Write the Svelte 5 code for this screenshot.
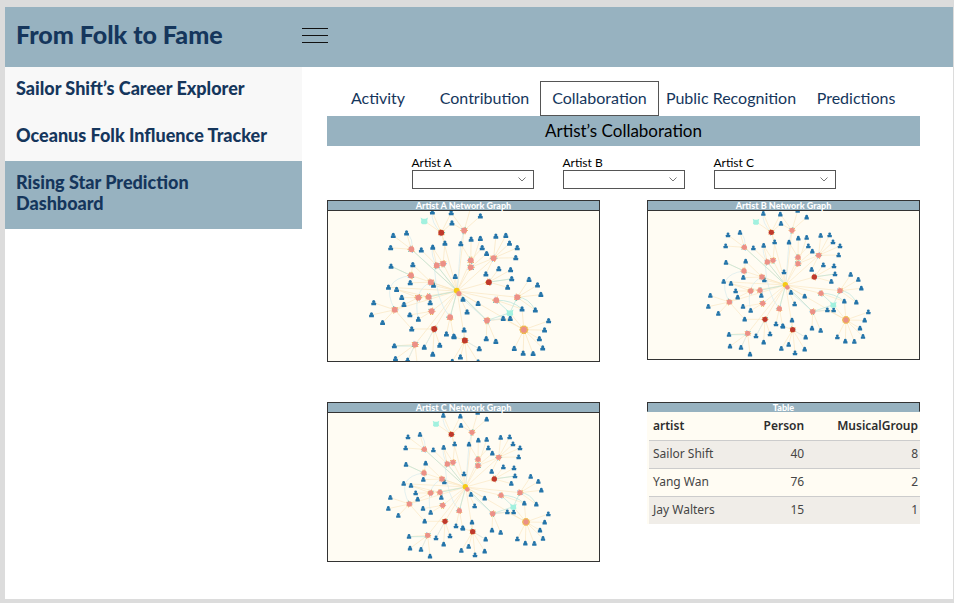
<script>
  const pages = [
    { label: 'Sailor Shift’s Career Explorer', active: false },
    { label: 'Oceanus Folk Influence Tracker', active: false },
    { label: 'Rising Star Prediction Dashboard', active: true }
  ];
  const tabs = ['Activity', 'Contribution', 'Collaboration', 'Public Recognition', 'Predictions'];
  const artists = ['A', 'B', 'C'];
  const rows = [
    ['Sailor Shift', 40, 8],
    ['Yang Wan', 76, 2],
    ['Jay Walters', 15, 1]
  ];

  const centre = [422, 261];
  // Each hub: position, colour kind, and the people attached to it.
  const hubs = [
    { x: 298, y: 148, kind: 'pink', leaves: [[285, 104], [249, 111], [242, 144]] },
    { x: 367, y: 192, kind: 'pink', leaves: [[325, 150], [356, 143]] },
    { x: 384, y: 187, kind: 'pink', leaves: [[389, 132], [356, 143]] },
    { x: 297, y: 219, kind: 'pink', leaves: [[302, 190], [243, 194]] },
    { x: 351, y: 237, kind: 'pink', leaves: [[302, 190], [295, 239]] },
    { x: 317, y: 279, kind: 'pink', leaves: [[272, 279], [258, 257], [278, 298]] },
    { x: 345, y: 277, kind: 'pink', leaves: [[349, 293], [258, 257]] },
    { x: 253, y: 312, kind: 'pink', leaves: [[196, 293], [190, 326], [220, 347], [278, 298], [299, 364]] },
    { x: 353, y: 316, kind: 'pink', leaves: [[294, 326], [317, 338]] },
    { x: 403, y: 332, kind: 'pink', leaves: [[393, 378], [413, 384]] },
    { x: 308, y: 406, kind: 'pink', leaves: [[252, 410], [255, 445], [288, 449], [315, 469]] },
    { x: 441, y: 97, kind: 'pink', leaves: [[406, 49], [458, 38], [485, 58], [408, 77]] },
    { x: 459, y: 178, kind: 'pink', leaves: [[432, 133], [460, 121], [490, 144]] },
    { x: 459, y: 197, kind: 'pink', leaves: [[502, 160], [485, 119]] },
    { x: 521, y: 172, kind: 'pink', leaves: [[527, 113], [554, 111], [564, 132], [585, 144], [581, 171], [500, 215]] },
    { x: 528, y: 286, kind: 'pink', leaves: [[598, 310]] },
    { x: 585, y: 278, kind: 'pink', leaves: [[617, 230], [640, 245], [649, 271], [634, 313]] },
    { x: 503, y: 341, kind: 'pink', leaves: [[547, 336], [566, 336], [501, 391], [527, 398]] },
    { x: 603, y: 366, kind: 'ringed', leaves: [[670, 342], [659, 367], [645, 391], [654, 416], [628, 431], [601, 430], [577, 417], [598, 310], [547, 336]] },
    { x: 379, y: 103, kind: 'red', leaves: [[355, 47], [408, 77], [406, 49], [389, 132]] },
    { x: 360, y: 364, kind: 'red', leaves: [[299, 364], [333, 414], [356, 433], [375, 408]] },
    { x: 508, y: 237, kind: 'red', leaves: [[535, 201], [567, 204], [570, 228], [559, 251]] },
    { x: 443, y: 395, kind: 'red', leaves: [[441, 367], [414, 385], [482, 418], [431, 440], [479, 454], [450, 465], [409, 452]] }
  ];
  const loose = [[417, 222], [438, 284], [479, 295], [449, 318], [358, 246], [236, 251]];
  const people = [...new Map([...hubs.flatMap((h) => h.leaves), ...loose].map((p) => [p.join(), p])).values()];
  const rays = Array.from({ length: 10 }, (_, i) => (i * Math.PI) / 5);
  const bits = ['#e8b13f', '#e8b13f', '#8fc9ea', '#efa14d', '#55bfa5'];
  const teal = [
    'M298 148L422 261', 'M243 194L297 219', 'M367 192L422 261', 'M345 277L422 261',
    'M508 237L570 228', 'M585 278Q615 278 634 313', 'M528 286L565 320', 'M565 320L585 278',
    'M565 320L503 341', 'M528 286Q570 285 598 310', 'M252 410H308', 'M403 332L422 261', 'M422 261L503 341'
  ];
  const blue = [
    'M285 104Q305 120 298 148', 'M356 143Q350 165 367 192', 'M379 103Q350 75 355 47',
    'M297 219Q210 230 253 312', 'M351 237Q300 260 317 338', 'M432 133L422 261',
    'M360 192Q365 290 403 332', 'M482 418L443 395', 'M333 414L360 364', 'M308 406L288 449', 'M503 341L547 336',
    'M438 284L503 341', 'M441 97Q435 120 432 133'
  ];
</script>

{#snippet network(name)}
  <svg class="network" viewBox="9 39 813 {name === 'A' ? 450 : 445}" role="img" aria-label="Artist {name} network">
    <g transform={name === 'A' ? 'scale(1.107) translate(-64 -9)' : ''}>
      <g class="gold">
        {#each hubs as h}
          <path d="M{h.x} {h.y}L{centre[0]} {centre[1]}" />
          {#each h.leaves as l}<path d="M{h.x} {h.y}L{l[0]} {l[1]}" />{/each}
        {/each}
        {#each loose as l}<path d="M{centre[0]} {centre[1]}L{l[0]} {l[1]}" />{/each}
        <path d="M379 103L333 71M521 172L459 197M603 366L565 320" />
      </g>
      <g class="blue">{#each blue as d}<path {d} />{/each}</g>
      <g class="teal">{#each teal as d}<path {d} />{/each}</g>
      {#each people as p}
        <g transform="translate({p[0]} {p[1]})" fill="#2474a9">
          <circle cy="-3.5" r="4.2" />
          <path d="M-6.5 6.5V1Q-6.5-1-4-1H4Q6.5-1 6.5 1V6.5Z" />
        </g>
      {/each}
      {#each hubs as h, n}
        {#each rays as r, i}
          <circle
            cx={h.x + Math.cos(r) * 9}
            cy={h.y + Math.sin(r) * 9}
            r={h.kind === 'ringed' ? 3.2 : (i + n) % 3 ? 1.6 : 0}
            fill={h.kind === 'ringed' ? '#edb84a' : bits[(i + n) % 5]}
          />
        {/each}
        <circle cx={h.x} cy={h.y} r="8" fill={h.kind === 'red' ? '#c0392b' : '#ec9086'} />
      {/each}
      <circle cx="421" cy="260" r="8" fill="#f5cb14" />
      <circle cx="427" cy="268" r="7" fill="#ec9086" />
      {#each [[333, 71], [565, 320]] as c}
        <path transform="translate({c[0]} {c[1]})" d="M-10-9L-4-6H4L10-9L8-2L9 6L5 9H-5L-9 6L-8-2Z" fill="#a2f1df" />
      {/each}
    </g>
  </svg>
{/snippet}

<div class="page">
  <header>
    <h1>From Folk to Fame</h1>
    <button class="menu" aria-label="Menu">
      <svg width="26" height="16" viewBox="0 0 26 16"><path d="M0 1.5H26M0 8.5H26M0 15.5H26" stroke="#111" /></svg>
    </button>
  </header>
  <div class="body">
    <nav class="side" aria-label="Pages">
      {#each pages as p}<a href="#top" class:active={p.active}>{p.label}</a>{/each}
    </nav>
    <main>
      <div class="tabs">
        {#each tabs as t}<button class:active={t === 'Collaboration'}>{t}</button>{/each}
      </div>
      <h2>Artist’s Collaboration</h2>
      <div class="filters">
        {#each artists as a}
          <div class="field">
            <label for="artist-{a}">Artist {a}</label>
            <div class="picker">
              <select id="artist-{a}"><option></option></select>
              <svg width="8" height="5" viewBox="0 0 8 5"><path d="M.5.5L4 4L7.5.5" fill="none" stroke="#777" /></svg>
            </div>
          </div>
        {/each}
      </div>
      <div class="panels">
        {#each artists as a}
          <section class="panel">
            <h3>Artist {a} Network Graph</h3>
            {@render network(a)}
          </section>
        {/each}
        <section class="data">
          <h3>Table</h3>
          <table>
            <colgroup><col class="name" /><col class="count" /><col /></colgroup>
            <thead><tr><th>artist</th><th>Person</th><th>MusicalGroup</th></tr></thead>
            <tbody>
              {#each rows as r}<tr>{#each r as c}<td>{c}</td>{/each}</tr>{/each}
            </tbody>
          </table>
        </section>
      </div>
    </main>
  </div>
</div>

<style>
  :global(body) { background: #dcdcdc; }
  .page {
    box-sizing: border-box;
    min-height: calc(100vh - 11px);
    margin: 7px 1px 4px 5px;
    background: #fff;
    font-family: Lato, sans-serif;
  }
  .page * { box-sizing: border-box; }
  h1, h2, h3 { margin: 0; }
  button { padding: 0; border: 0; background: none; font: inherit; }
  header { display: flex; align-items: center; height: 60px; padding-left: 11px; background: #97b2c0; }
  h1 { width: 286px; color: #15365c; font-size: 25px; line-height: 28px; font-weight: 900; padding-bottom: 6px; }
  .menu { display: flex; padding-bottom: 4px; }
  .body { display: flex; align-items: flex-start; }
  .side { display: flex; flex-direction: column; flex: none; width: 297px; background: #f8f8f8; }
  .side a {
    padding: 11px 80px 15px 11px;
    color: #15365c;
    font-size: 18px;
    line-height: 21px;
    font-weight: 900;
    text-decoration: none;
    white-space: nowrap;
  }
  .side a.active { background: #97b2c0; white-space: normal; }
  main { flex: 1; min-width: 0; padding: 14px 33px 0 25px; }
  .tabs { display: grid; grid-template-columns: 102fr 111fr 119fr 144fr 106fr; padding-right: 11px; height: 35px; }
  .tabs button { padding-bottom: 2px; border: 1px solid transparent; color: #15365c; font-size: 16px; white-space: nowrap; }
  .tabs .active { border-color: #555; }
  h2 { background: #97b2c0; font-size: 17px; line-height: 30px; font-weight: 400; text-align: center; }
  .filters { display: flex; justify-content: center; gap: 29px; padding-top: 9px; }
  .field { width: 122px; }
  label { display: block; font-size: 12px; line-height: 15px; }
  .picker { display: grid; align-items: center; }
  .picker > * { grid-area: 1 / 1; }
  .picker svg { justify-self: end; margin-right: 8px; pointer-events: none; }
  select { width: 100%; height: 19px; border: 1px solid #555; background: #fff; appearance: none; }
  .panels { display: grid; grid-template-columns: 1fr 1fr; gap: 40px 47px; align-items: start; padding-top: 11px; }
  .panel { border: 1px solid #333; background: #fffcf3; }
  h3 {
    height: 10px;
    border-bottom: 1px solid #333;
    background: #97b2c0;
    color: #fff;
    font-size: 9px;
    line-height: 10px;
    font-weight: 900;
    text-align: center;
  }
  .network { display: block; width: 100%; overflow: hidden; }
  .gold path { fill: none; stroke: #fae7c3; stroke-width: 2; }
  .blue path { fill: none; stroke: #d6eaed; stroke-width: 2; }
  .teal path { fill: none; stroke: #b9e4d9; stroke-width: 2; }
  .data { background: #fffcf3; }
  .data h3 { border: 1px solid #333; border-bottom-color: #97b2c0; }
  table {
    width: 100%;
    border-left: 2px solid #fffcf3;
    border-collapse: separate;
    border-spacing: 0;
    table-layout: fixed;
    font-family: "Noto Sans", sans-serif;
    font-size: 12px;
    color: #454545;
  }
  .name { width: 36%; }
  .count { width: 22%; }
  th, td { height: 28px; padding: 0 2px 2px 4px; text-align: right; }
  th { padding-left: 0; color: #2d2d2d; font-weight: 600; }
  th:first-child { padding-left: 4px; }
  th:first-child, td:first-child { text-align: left; }
  td { border-top: 1px solid #ccc; }
  tbody tr:nth-child(odd) { background: #f0ede8; }
</style>
